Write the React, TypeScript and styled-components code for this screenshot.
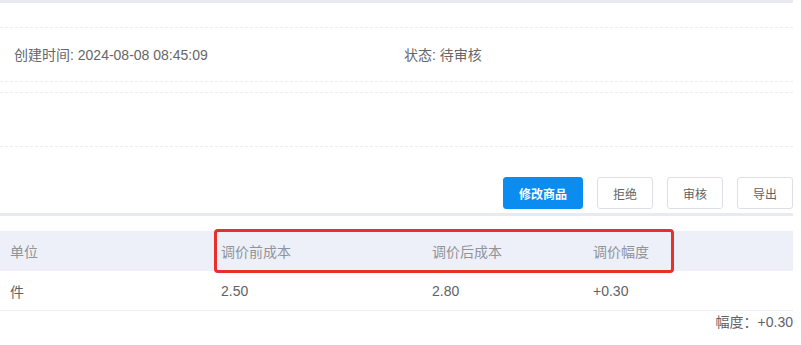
import React from 'react'
import styled, { createGlobalStyle } from 'styled-components'

const GlobalStyle = createGlobalStyle`
  html, body {
    margin: 0;
    padding: 0;
    background: #fff;
  }
  body {
    font-family: "Liberation Sans", Arial, "Noto Sans CJK SC", sans-serif;
    font-size: 14px;
    color: #606266;
  }
`

const Page = styled.div`
  width: 793px;
  display: flex;
  flex-direction: column;
`

const Bar = styled.div<{ $top?: number }>`
  height: 3px;
  background: #e8eaef;
  margin-top: ${(p) => p.$top ?? 0}px;
`

const InfoRow = styled.div<{ $top: number }>`
  margin-top: ${(p) => p.$top}px;
  height: 55px;
  box-sizing: border-box;
  border-top: 1px dashed #ebedf0;
  border-bottom: 1px dashed #ebedf0;
  display: grid;
  grid-template-columns: 390px 1fr;
  align-items: center;
  padding-left: 14px;
  padding-bottom: 2px;
`

const InfoItem = styled.div`
  color: #666;
  font-size: 14px;
`

const Actions = styled.div`
  margin-top: 30px;
  display: flex;
  justify-content: flex-end;
  gap: 14px;
`

const Btn = styled.button<{ $primary?: boolean }>`
  height: 32px;
  width: ${(p) => (p.$primary ? '80px' : '56px')};
  padding: 0;
  box-sizing: border-box;
  border-radius: 3px;
  font-family: inherit;
  font-size: 12px;
  cursor: pointer;
  border: 1px solid ${(p) => (p.$primary ? '#0a8cf0' : '#dcdfe6')};
  background: ${(p) => (p.$primary ? '#0a8cf0' : '#fff')};
  color: ${(p) => (p.$primary ? '#fff' : '#606266')};
  font-weight: ${(p) => (p.$primary ? 700 : 400)};
`

const TableWrap = styled.div`
  position: relative;
  margin-top: 15px;
`

const Row = styled.div<{ $head?: boolean }>`
  display: grid;
  grid-template-columns: 211px 211px 161px 1fr;
  height: ${(p) => (p.$head ? 40 : 39)}px;
  align-items: center;
  background: ${(p) => (p.$head ? '#edf0f8' : '#fff')};
  border-bottom: ${(p) => (p.$head ? 'none' : '1px solid #ebeef5')};
  color: ${(p) => (p.$head ? '#909399' : '#606266')};
  font-size: 14px;
`

const Cell = styled.div`
  padding-left: 10px;
`

const Highlight = styled.div`
  position: absolute;
  left: 214px;
  top: -2px;
  width: 460px;
  height: 44px;
  box-sizing: border-box;
  border: 3px solid #e8302a;
  border-radius: 4px;
  pointer-events: none;
`

const Summary = styled.div`
  text-align: right;
  margin-top: 1px;
  color: #606266;
  font-size: 14px;
  line-height: 20px;
`

const headers = ['单位', '调价前成本', '调价后成本', '调价幅度']
const values = ['件', '2.50', '2.80', '+0.30']

export default function App() {
  return (
    <>
      <GlobalStyle />
      <Page>
        <Bar />
        <InfoRow $top={24}>
          <InfoItem>创建时间: 2024-08-08 08:45:09</InfoItem>
          <InfoItem>状态: 待审核</InfoItem>
        </InfoRow>
        <InfoRow $top={10} />
        <Actions>
          <Btn $primary>修改商品</Btn>
          <Btn>拒绝</Btn>
          <Btn>审核</Btn>
          <Btn>导出</Btn>
        </Actions>
        <Bar $top={4} />
        <TableWrap>
          <Row $head>
            {headers.map((h) => (
              <Cell key={h}>{h}</Cell>
            ))}
          </Row>
          <Row>
            {values.map((v, i) => (
              <Cell key={i}>{v}</Cell>
            ))}
          </Row>
          <Highlight />
        </TableWrap>
        <Summary>幅度：+0.30</Summary>
      </Page>
    </>
  )
}
